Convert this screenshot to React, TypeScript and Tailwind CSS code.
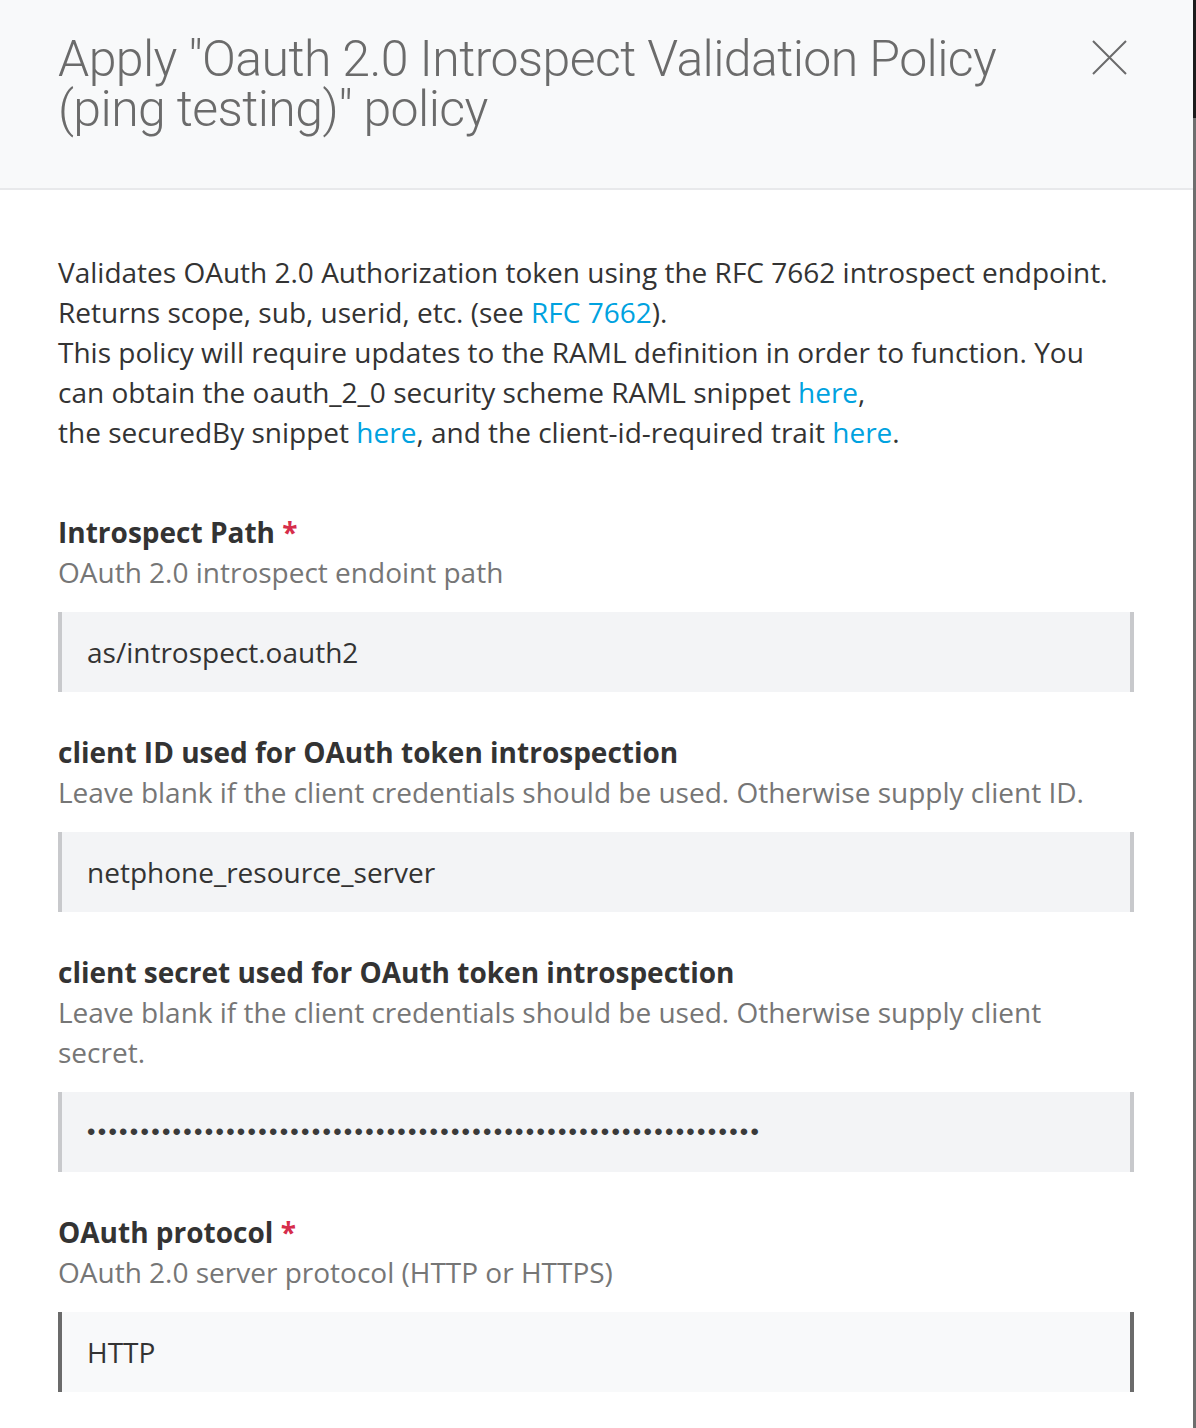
const body = { fontFamily: '"Open Sans", "Noto Sans", sans-serif' };
const title = { fontFamily: 'Roboto, "Noto Sans", sans-serif' };

function Field({
  label,
  required,
  help,
  children,
  active,
}: {
  label: string;
  required?: boolean;
  help: string;
  children: React.ReactNode;
  active?: boolean;
}) {
  return (
    <div className="mt-10 first:mt-0">
      <div className="text-[28px] font-bold leading-[40px] text-[#333]">
        {label}
        {required && <span className="text-[#d62d4b]"> *</span>}
      </div>
      <div className="text-[28px] leading-[40px] text-[#767676]">{help}</div>
      <div
        className={
          active
            ? "mt-5 flex h-20 items-center border-x-4 border-[#6b6b6b] bg-[#f8f9fa] px-[25px] text-[28px] text-[#333]"
            : "mt-5 flex h-20 items-center border-x-4 border-[#c8c9cc] bg-[#f3f4f6] px-[25px] text-[28px] text-[#333]"
        }
      >
        {children}
      </div>
    </div>
  );
}

export default function App() {
  const link = "text-[#00a2df]";
  return (
    <div className="flex min-h-[1428px] w-[1196px] bg-white" style={body}>
      {/* Modal */}
      <div className="flex flex-1 flex-col">
        {/* Header */}
        <header className="flex h-[190px] border-b-2 border-[#e8e9eb] bg-[#f8f9fa] pl-[58px] pr-[66px] pt-[34px]">
          <h1
            className="flex-1 text-[50px] font-light leading-[50px] tracking-[-0.6px] text-[#6b6b6b]"
            style={title}
          >
            Apply "Oauth 2.0 Introspect Validation Policy
            <br />
            (ping testing)" policy
          </h1>
          <button className="mt-[6px] h-[35px] w-[35px] text-[#6b6b6b]">
            <svg viewBox="0 0 35 35" className="h-[35px] w-[35px]">
              <path d="M1 1L34 34M34 1L1 34" stroke="currentColor" strokeWidth="2" />
            </svg>
          </button>
        </header>

        {/* Body */}
        <div className="pb-9 pl-[58px] pr-[59px] pt-[62px]">
          <p className="text-[28px] leading-[40px] text-[#333]">
            Validates OAuth 2.0 Authorization token using the RFC 7662 introspect endpoint.
            <br />
            Returns scope, sub, userid, etc. (see <span className={link}>RFC 7662</span>).
            <br />
            This policy will require updates to the RAML definition in order to function. You
            <br />
            can obtain the oauth_2_0 security scheme RAML snippet <span className={link}>here</span>,
            <br />
            the securedBy snippet <span className={link}>here</span>, and the client-id-required trait{" "}
            <span className={link}>here</span>.
          </p>

          <div className="mt-[60px]">
            <Field label="Introspect Path" required help="OAuth 2.0 introspect endoint path">
              as/introspect.oauth2
            </Field>
            <Field
              label="client ID used for OAuth token introspection"
              help="Leave blank if the client credentials should be used. Otherwise supply client ID."
            >
              netphone_resource_server
            </Field>
            <Field
              label="client secret used for OAuth token introspection"
              help="Leave blank if the client credentials should be used. Otherwise supply client secret."
            >
              <span
                className="text-[24px] tracking-[2.3px] text-[#3a3a3a]"
                style={{ fontFamily: '"Liberation Sans", Arial, sans-serif' }}
              >
                {"•".repeat(63)}
              </span>
            </Field>
            <Field label="OAuth protocol" required help="OAuth 2.0 server protocol (HTTP or HTTPS)" active>
              HTTP
            </Field>
          </div>
        </div>
      </div>

      {/* Right edge of backdrop */}
      <div className="flex w-[3px] flex-col">
        <div className="h-[118px] bg-[#1c1c1c]" />
        <div className="flex-1 bg-[#6e6e6e]" />
      </div>
    </div>
  );
}
